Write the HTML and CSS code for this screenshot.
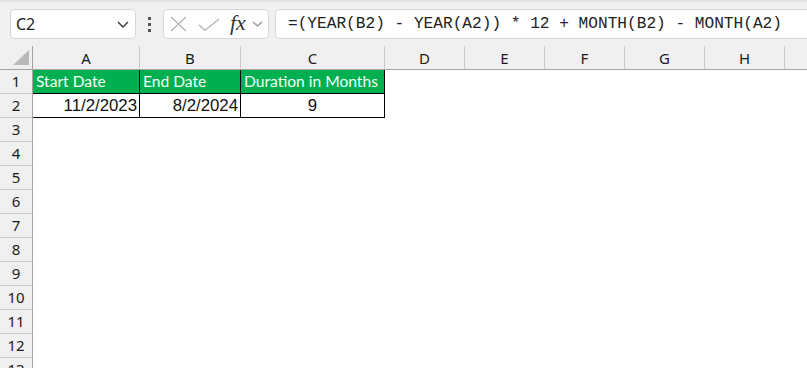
FILE: index.html
```html
<!DOCTYPE html>
<html>
<head>
    <title>Duration in Months</title>
    <link rel="stylesheet" href="styles.css">
</head>
<body>
    <div class="toolbar">
        <div class="namebox">
            <span class="cellref">C2</span>
            <svg class="chev" width="12" height="7" viewBox="0 0 12 7"><path d="M1 1 L6 6 L11 1" fill="none" stroke="#333" stroke-width="1.4"/></svg>
        </div>
        <div class="dots"><i></i><i></i><i></i></div>
        <div class="fxbox">
            <svg width="17" height="16" viewBox="0 0 17 16"><path d="M1 1 L16 15 M16 1 L1 15" stroke="#b3b3b3" stroke-width="1.3" fill="none"/></svg>
            <svg class="check" width="22" height="14" viewBox="0 0 22 14"><path d="M1 7 L7 12.5 L21 1" stroke="#b3b3b3" stroke-width="1.3" fill="none"/></svg>
            <span class="fx">fx</span>
            <svg width="11" height="6" viewBox="0 0 11 6"><path d="M1 1 L5.5 5 L10 1" fill="none" stroke="#8a8a8a" stroke-width="1.1"/></svg>
        </div>
        <div class="formula">=(YEAR(B2) - YEAR(A2)) * 12 + MONTH(B2) - MONTH(A2)</div>
    </div>

    <div class="sheet">
        <div class="corner"><span class="tri"></span></div>
        <div class="colhead">A</div>
        <div class="colhead">B</div>
        <div class="colhead">C</div>
        <div class="colhead">D</div>
        <div class="colhead">E</div>
        <div class="colhead">F</div>
        <div class="colhead">G</div>
        <div class="colhead">H</div>
        <div class="colhead last"></div>

        <div class="rowhead">1</div>
        <div class="cell head">Start Date</div>
        <div class="cell head">End Date</div>
        <div class="cell head">Duration in Months</div>
        <div class="cell"></div><div class="cell"></div><div class="cell"></div><div class="cell"></div><div class="cell"></div><div class="cell"></div>

        <div class="rowhead">2</div>
        <div class="cell data num">11/2/2023</div>
        <div class="cell data num">8/2/2024</div>
        <div class="cell data mid">9</div>
        <div class="cell"></div><div class="cell"></div><div class="cell"></div><div class="cell"></div><div class="cell"></div><div class="cell"></div>

        <div class="rowhead">3</div><div class="blank"></div>
        <div class="rowhead">4</div><div class="blank"></div>
        <div class="rowhead">5</div><div class="blank"></div>
        <div class="rowhead">6</div><div class="blank"></div>
        <div class="rowhead">7</div><div class="blank"></div>
        <div class="rowhead">8</div><div class="blank"></div>
        <div class="rowhead">9</div><div class="blank"></div>
        <div class="rowhead">10</div><div class="blank"></div>
        <div class="rowhead">11</div><div class="blank"></div>
        <div class="rowhead">12</div><div class="blank"></div>
        <div class="rowhead">13</div><div class="blank"></div>
    </div>
</body>
</html>
```

FILE: styles.css
```css
html, body {
    margin: 0;
    height: 368px;
    overflow: hidden;
    background-color: #fff;
}
body {
    font-family: "Noto Sans", Arial, sans-serif;
    color: #222;
}
.toolbar {
    display: flex;
    align-items: center;
    height: 44px;
    padding-left: 10px;
    background-color: #f0f0f0;
    border-top: 2px solid #e4e4e4;
    overflow: hidden;
}
.namebox, .fxbox, .formula {
    box-sizing: border-box;
    height: 30px;
    background-color: #fff;
    border: 1px solid #d6d6d6;
    border-radius: 5px;
    display: flex;
    align-items: center;
}
.namebox {
    width: 126px;
    padding: 0 6px 0 5px;
    justify-content: space-between;
}
.cellref {
    font-size: 16px;
    color: #222;
}
.chev {
    margin-top: 1px;
}
.dots {
    width: 27px;
    display: flex;
    flex-direction: column;
    align-items: center;
    gap: 3px;
}
.dots i {
    width: 3px;
    height: 3px;
    background-color: #555;
}
.fxbox {
    width: 106px;
    padding-left: 6px;
}
.check {
    margin-left: 11px;
    margin-top: 1px;
}
.fx {
    font-family: "Liberation Serif", serif;
    font-style: italic;
    font-size: 22px;
    color: #333;
    margin-left: 10px;
    margin-right: 6px;
    margin-top: -2px;
}
.formula {
    flex: 1;
    margin-left: 6px;
    margin-right: -12px;
    padding-left: 12px;
    font-family: "Liberation Mono", monospace;
    font-size: 16.15px;
    color: #222;
    white-space: nowrap;
}
.sheet {
    display: grid;
    grid-template-columns: 33px 107px 101px 144px 80px 80px 80px 80px 80px 1fr;
    grid-auto-rows: 24px;
}
.corner, .colhead {
    background-color: #f0f0f0;
    border-bottom: 1px solid #a3a3a3;
    box-sizing: border-box;
}
.corner {
    border-right: 1px solid #a3a3a3;
    display: flex;
    justify-content: flex-end;
    align-items: flex-end;
    padding: 0 3px 4px 0;
}
.tri {
    width: 0;
    height: 0;
    border-left: 16px solid transparent;
    border-bottom: 15px solid #b9b9b9;
}
.colhead {
    border-right: 1px solid #cacaca;
    font-size: 15px;
    color: #1a1a1a;
    text-align: center;
    line-height: 23px;
    padding-top: 1px;
}
.colhead.last {
    border-right: none;
}
.rowhead {
    box-sizing: border-box;
    background-color: #f0f0f0;
    border-right: 1px solid #a3a3a3;
    border-bottom: 1px solid #cacaca;
    font-size: 15px;
    color: #1a1a1a;
    text-align: center;
    line-height: 23px;
}
.blank {
    grid-column: 2 / -1;
}
.cell {
    box-sizing: border-box;
    border-right: 1px solid #fff;
    border-bottom: 1px solid #fff;
    line-height: 23px;
    white-space: nowrap;
    overflow: hidden;
}
.cell.head, .cell.data {
    border-right-color: #000;
    border-bottom-color: #000;
}
.cell.head {
    background-color: #00b050;
    color: #f4fff6;
    font-family: Lato, "Liberation Sans", sans-serif;
    font-size: 15.6px;
    padding-left: 3px;
}
.cell.data {
    font-family: "Liberation Sans", Arial, sans-serif;
    font-size: 16.8px;
    color: #111;
}
.num {
    text-align: right;
    padding-right: 2px;
}
.mid {
    text-align: center;
}
```
